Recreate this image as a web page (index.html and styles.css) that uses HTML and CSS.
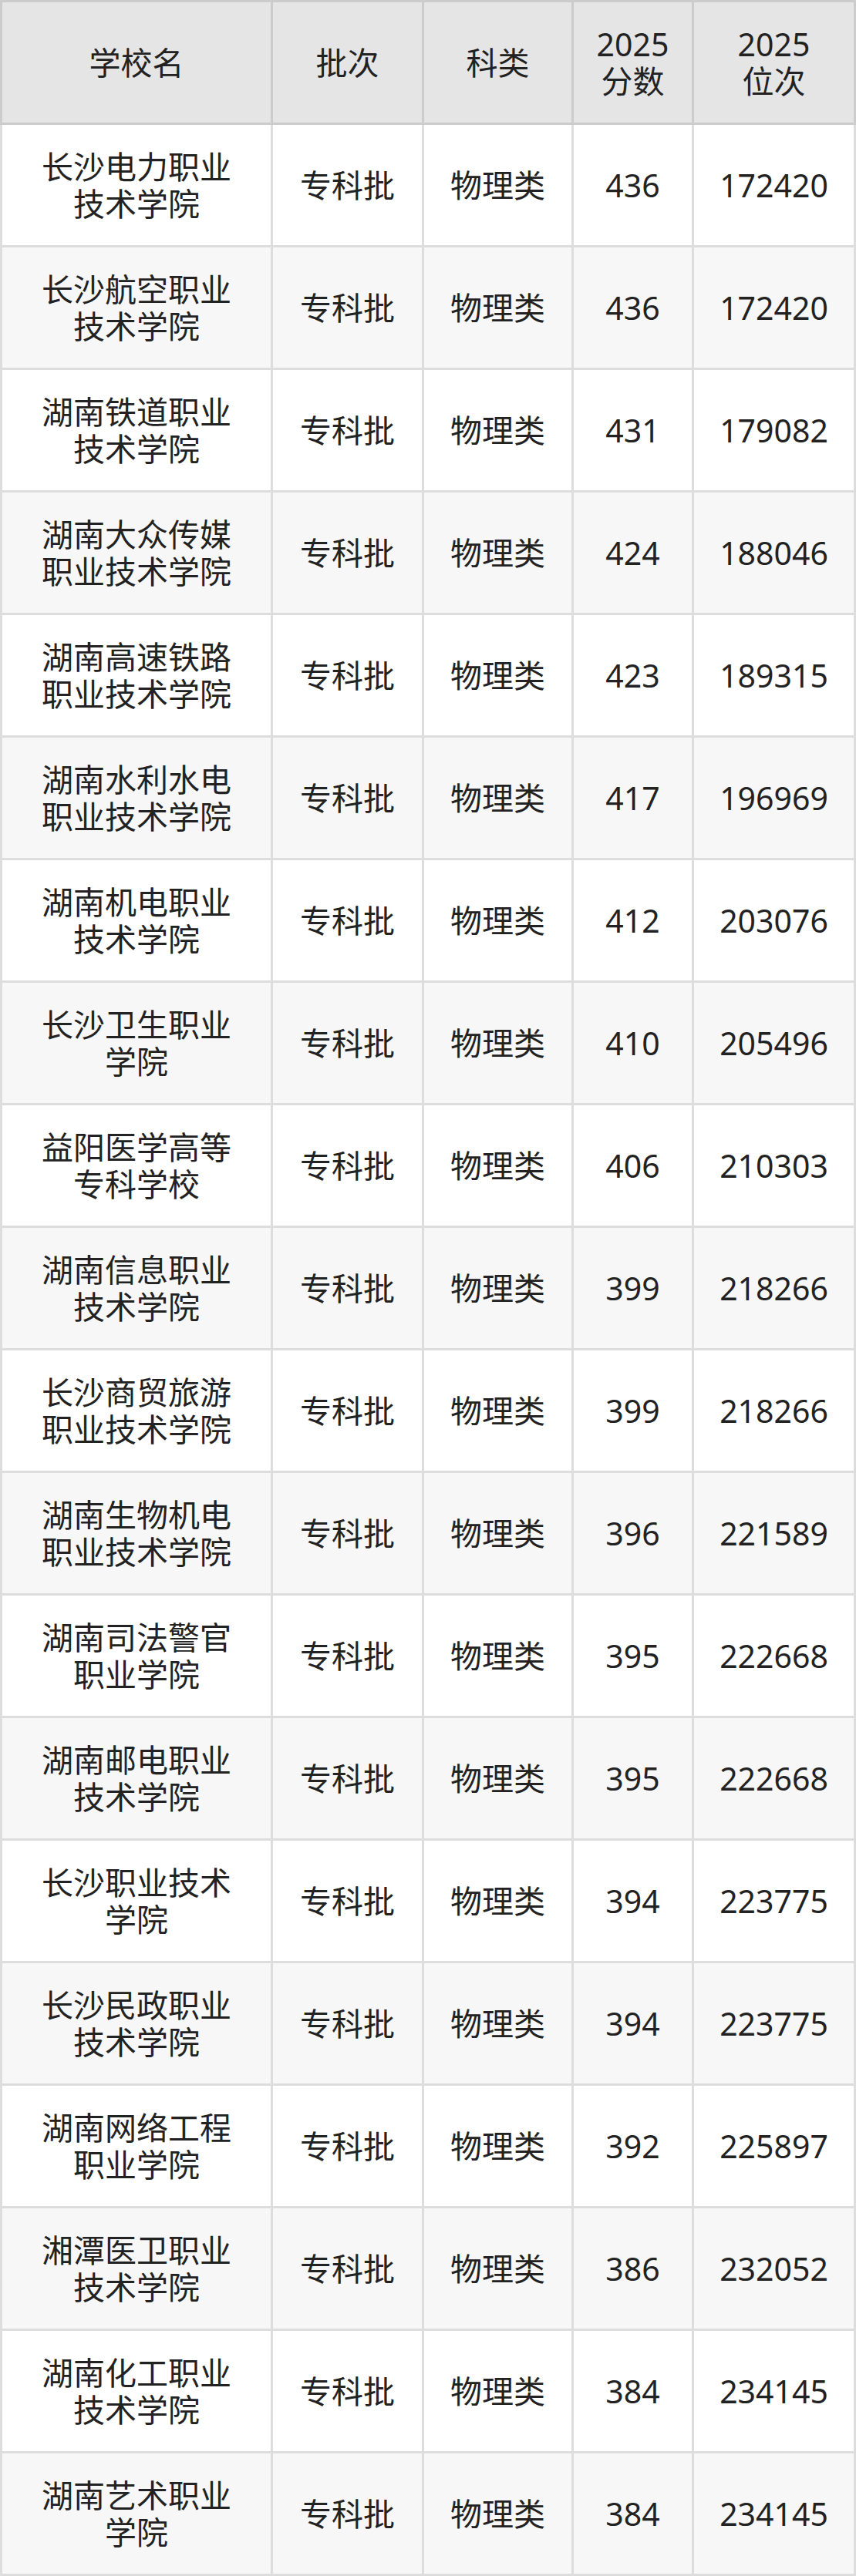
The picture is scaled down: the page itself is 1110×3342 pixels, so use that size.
FILE: index.html
```html
<!DOCTYPE html>
<html lang="zh-CN">
<head>
<meta charset="utf-8">
<title>湖南专科批 物理类 2025 分数位次</title>
<link rel="stylesheet" href="styles.css">
</head>
<body>
<table class="score-table">
  <thead>
    <tr>
      <th class="c-name">学校名</th>
      <th class="c-batch">批次</th>
      <th class="c-type">科类</th>
      <th class="c-score">2025 分数</th>
      <th class="c-rank">2025 位次</th>
    </tr>
  </thead>
  <tbody>
    <tr><td class="name">长沙电力职业技术学院</td><td>专科批</td><td>物理类</td><td>436</td><td>172420</td></tr>
    <tr><td class="name">长沙航空职业技术学院</td><td>专科批</td><td>物理类</td><td>436</td><td>172420</td></tr>
    <tr><td class="name">湖南铁道职业技术学院</td><td>专科批</td><td>物理类</td><td>431</td><td>179082</td></tr>
    <tr><td class="name">湖南大众传媒职业技术学院</td><td>专科批</td><td>物理类</td><td>424</td><td>188046</td></tr>
    <tr><td class="name">湖南高速铁路职业技术学院</td><td>专科批</td><td>物理类</td><td>423</td><td>189315</td></tr>
    <tr><td class="name">湖南水利水电职业技术学院</td><td>专科批</td><td>物理类</td><td>417</td><td>196969</td></tr>
    <tr><td class="name">湖南机电职业技术学院</td><td>专科批</td><td>物理类</td><td>412</td><td>203076</td></tr>
    <tr><td class="name">长沙卫生职业学院</td><td>专科批</td><td>物理类</td><td>410</td><td>205496</td></tr>
    <tr><td class="name">益阳医学高等专科学校</td><td>专科批</td><td>物理类</td><td>406</td><td>210303</td></tr>
    <tr><td class="name">湖南信息职业技术学院</td><td>专科批</td><td>物理类</td><td>399</td><td>218266</td></tr>
    <tr><td class="name">长沙商贸旅游职业技术学院</td><td>专科批</td><td>物理类</td><td>399</td><td>218266</td></tr>
    <tr><td class="name">湖南生物机电职业技术学院</td><td>专科批</td><td>物理类</td><td>396</td><td>221589</td></tr>
    <tr><td class="name">湖南司法警官职业学院</td><td>专科批</td><td>物理类</td><td>395</td><td>222668</td></tr>
    <tr><td class="name">湖南邮电职业技术学院</td><td>专科批</td><td>物理类</td><td>395</td><td>222668</td></tr>
    <tr><td class="name">长沙职业技术学院</td><td>专科批</td><td>物理类</td><td>394</td><td>223775</td></tr>
    <tr><td class="name">长沙民政职业技术学院</td><td>专科批</td><td>物理类</td><td>394</td><td>223775</td></tr>
    <tr><td class="name">湖南网络工程职业学院</td><td>专科批</td><td>物理类</td><td>392</td><td>225897</td></tr>
    <tr><td class="name">湘潭医卫职业技术学院</td><td>专科批</td><td>物理类</td><td>386</td><td>232052</td></tr>
    <tr><td class="name">湖南化工职业技术学院</td><td>专科批</td><td>物理类</td><td>384</td><td>234145</td></tr>
    <tr><td class="name">湖南艺术职业学院</td><td>专科批</td><td>物理类</td><td>384</td><td>234145</td></tr>
  </tbody>
</table>
</body>
</html>
```
FILE: styles.css
```css
html, body {
  margin: 0;
  padding: 0;
  background: #ffffff;
}

body {
  font-family: "Noto Sans", "Noto Sans CJK SC", sans-serif;
  color: #222222;
}

.score-table {
  width: 1110px;
  table-layout: fixed;
  border-collapse: separate;
  border-spacing: 0;
  font-size: 41px;
  line-height: 48px;
}

.score-table th,
.score-table td {
  box-sizing: border-box;
  padding: 30px 10px;
  text-align: center;
  vertical-align: middle;
  font-weight: 400;
  border-right: 3px solid #dddddd;
  border-bottom: 3px solid #dddddd;
}

.score-table th {
  background: #e5e5e5;
  border-color: #cccccc;
  border-top: 3px solid #cccccc;
}

.score-table th:first-child,
.score-table td:first-child {
  border-left: 3px solid #dddddd;
}

.score-table th:first-child {
  border-left-color: #cccccc;
}

.score-table .c-name { width: 354px; }
.score-table .c-batch { width: 196px; }
.score-table .c-type { width: 194px; }
.score-table .c-score { width: 156px; }
.score-table .c-rank {
  width: 210px;
  padding-left: 40px;
  padding-right: 40px;
}

.score-table td.name {
  padding-left: 40px;
  padding-right: 40px;
}

.score-table tbody tr:nth-child(odd) td {
  background: #ffffff;
}

.score-table tbody tr:nth-child(even) td {
  background: #f7f7f7;
}
```
